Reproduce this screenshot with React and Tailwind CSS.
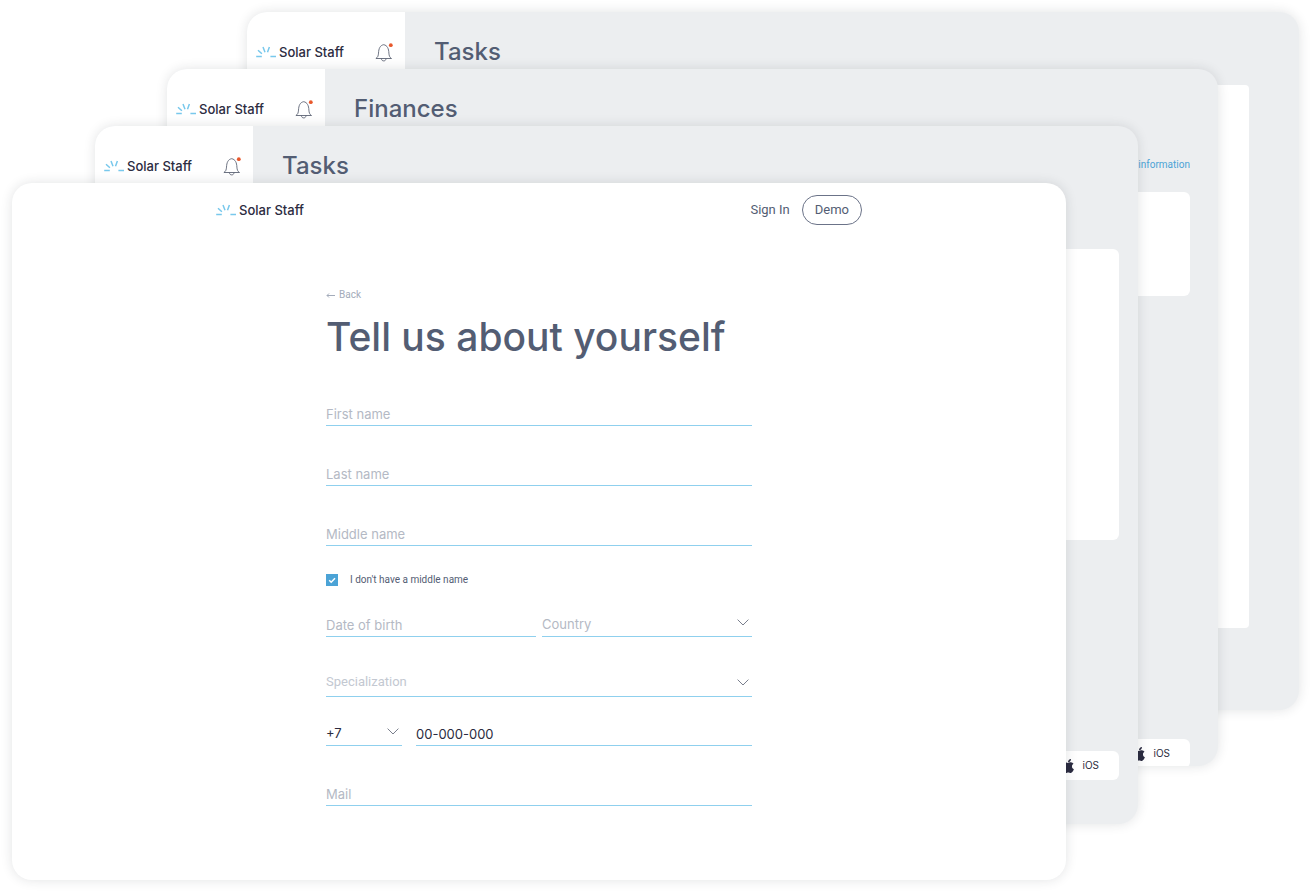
import { FaApple } from "react-icons/fa";

function Logo() {
  return (
    <a href="#" className="flex items-center gap-[3px] text-[13px] leading-5 font-medium text-[#2b2b40]">
      <svg width="20" height="12" viewBox="0 0 20 12" fill="none" stroke="#78c8ec" strokeWidth="1.500">
        <path d="M.2 10.500h5.600M14.400 10.500H20M2 4.200l3.900 3.600M7 1l2 5.200M13.400 1l-1.900 5.200" />
      </svg>
      Solar Staff
    </a>
  );
}

function Bell() {
  return (
    <button type="button" aria-label="Notifications" className="shrink-0">
      <svg width="19" height="19" viewBox="0 0 19 19" fill="none">
        <path
          d="M.9 15.500c2-1.200 2.400-2.800 2.600-5.400C3.700 5.700 5 2.300 8.700 1.700c3.600.6 5 4 5.200 8.400.2 2.600.6 4.200 2.600 5.400z"
          stroke="#5d6475"
          strokeWidth="0.9"
          strokeLinejoin="round"
        />
        <path d="M6.400 15.600c.2 1.700 1.100 2.300 2.300 2.300s2.100-.6 2.300-2.300" stroke="#5d6475" strokeWidth="0.9" />
        <circle cx="15.800" cy="2.200" r="1.900" fill="#e8582c" />
      </svg>
    </button>
  );
}

function IosButton({ className }) {
  return (
    <button
      type="button"
      className={`flex h-[29px] shrink-0 items-center gap-[7px] self-end rounded-md bg-white pr-5 pl-4 text-[10px] text-[#2b2b40] ${className}`}
    >
      <FaApple size={16} />
      iOS
    </button>
  );
}

// Dashboard window that sits behind the form
function BackWindow({ title, className, children }) {
  return (
    <section
      className={`col-start-1 row-start-1 flex overflow-hidden rounded-[20px] bg-[#eceef0] shadow-[0_0_12px_rgba(30,40,50,0.13)] ${className}`}
    >
      <aside className="w-[158px] shrink-0 bg-white">
        <div className="flex items-center justify-between pt-[30px] pr-[11px] pl-[9px]">
          <Logo />
          <Bell />
        </div>
      </aside>
      <div className="flex min-w-0 flex-1 flex-col">
        <h2 className="pt-6 pl-[29px] text-2xl leading-8 font-medium text-[#535d73]">{title}</h2>
        {children}
      </div>
    </section>
  );
}

function Field({ label, type = "text", className = "", ...props }) {
  return (
    <input
      type={type}
      aria-label={label}
      placeholder={label}
      className={`block h-6 w-full min-w-0 border-b border-[#8fd0ee] bg-transparent text-[13px] text-[#2b2b40] outline-none placeholder:text-[#b4b9c4] ${className}`}
      {...props}
    />
  );
}

function SelectField({ label, options, className = "", selectClass = "h-6 text-[13px] text-[#b4b9c4]", chevronClass = "top-1.5" }) {
  return (
    <div className={`relative ${className}`}>
      <select
        aria-label={label}
        className={`block w-full appearance-none border-b border-[#8fd0ee] bg-transparent outline-none ${selectClass}`}
      >
        {options.map((o) => (
          <option key={o}>{o}</option>
        ))}
      </select>
      <svg
        className={`pointer-events-none absolute right-[3px] ${chevronClass}`}
        width="12"
        height="7"
        viewBox="0 0 12 7"
        fill="none"
        stroke="#6b7080"
        strokeWidth="0.9"
      >
        <path d="M.6.6L6 6 11.400.6" />
      </svg>
    </div>
  );
}

export default function App() {
  return (
    <main className="grid bg-white font-['Inter','Liberation_Sans',sans-serif]">
      <BackWindow title="Tasks" className="mt-3 mr-[11px] mb-[182px] ml-[247px]">
        <div className="mt-[17px] mr-[50px] mb-[82px] ml-[29px] flex-1 rounded-sm bg-white" />
      </BackWindow>

      <BackWindow title="Finances" className="mt-[69px] mr-[92px] mb-[126px] ml-[167px]">
        <div className="flex flex-1 flex-col pr-7 pl-[29px]">
          <a href="#" className="mt-8 self-end font-['Roboto',sans-serif] text-[10px] leading-4 text-[#4ba3d6]">
            information
          </a>
          <div className="mt-[19px] h-[104px] rounded-md bg-white" />
          <IosButton className="mt-auto -mb-0.5" />
        </div>
      </BackWindow>

      <BackWindow title="Tasks" className="mt-[126px] mr-[172px] mb-[68px] ml-[95px]">
        <div className="flex flex-1 flex-col pr-[19px] pb-11 pl-[29px]">
          <div className="mt-[67px] h-[291px] rounded-md bg-white" />
          <IosButton className="mt-auto" />
        </div>
      </BackWindow>

      <section className="z-10 col-start-1 row-start-1 mt-[183px] mr-[244px] mb-3 ml-3 rounded-[20px] bg-white pb-[74px] shadow-[0_0_12px_rgba(30,40,50,0.13)]">
        <header className="mx-auto flex max-w-[646px] items-center justify-between pt-3">
          <Logo />
          <nav className="flex items-center gap-3 font-['Roboto',sans-serif] text-[13px] text-[#535d73]">
            <a href="#">Sign In</a>
            <button type="button" className="h-[30px] rounded-full border border-[#6b7388] px-3">
              Demo
            </button>
          </nav>
        </header>

        <form className="mx-auto max-w-[426px] pt-[62px]" onSubmit={(e) => e.preventDefault()}>
          <a href="#" className="flex items-center gap-1 font-['Roboto',sans-serif] text-[10px] leading-4 text-[#a3abba]">
            <svg width="9" height="7" viewBox="0 0 9 7" fill="none" stroke="currentColor">
              <path d="M9 3.500H1M3 1.500L1 3.500 3 5.500" />
            </svg>
            Back
          </a>
          <h1 className="mt-[9px] text-[39px] leading-[50px] font-medium text-[#535d73]">Tell us about yourself</h1>

          <div className="mt-10 flex flex-col gap-9">
            <Field label="First name" />
            <Field label="Last name" />
            <Field label="Middle name" />
          </div>

          <label className="mt-6 flex w-fit items-center gap-3 font-['Roboto',sans-serif] text-[10px] leading-5 text-[#535d73]">
            <span className="relative flex">
              <input type="checkbox" defaultChecked className="peer size-3 appearance-none border border-[#4ba3d6] checked:bg-[#4ba3d6]" />
              <svg
                className="pointer-events-none absolute inset-0 hidden peer-checked:block"
                width="12"
                height="12"
                viewBox="0 0 12 12"
                fill="none"
                stroke="#fff"
                strokeWidth="1.500"
              >
                <path d="M3.200 6.200l2 2 3.800-4" />
              </svg>
            </span>
            I don't have a middle name
          </label>

          <div className="mt-[23px] grid grid-cols-2 gap-1.5">
            <Field label="Date of birth" />
            <SelectField label="Country" options={["Country"]} />
          </div>

          <SelectField
            label="Specialization"
            options={["Specialization"]}
            className="mt-8"
            selectClass="h-7 pb-0.5 font-['Roboto',sans-serif] text-[13px] text-[#c3c8d1]"
            chevronClass="top-2.5"
          />

          <div className="mt-[25px] flex gap-[14px]">
            <SelectField
              label="+7"
              options={["+7"]}
              className="w-[76px] shrink-0"
              selectClass="h-6 text-[13px] text-[#2b2b40]"
            />
            <Field label="00-000-000" type="tel" defaultValue="00-000-000" />
          </div>

          <Field label="Mail" type="email" className="mt-9" />
        </form>
      </section>
    </main>
  );
}
